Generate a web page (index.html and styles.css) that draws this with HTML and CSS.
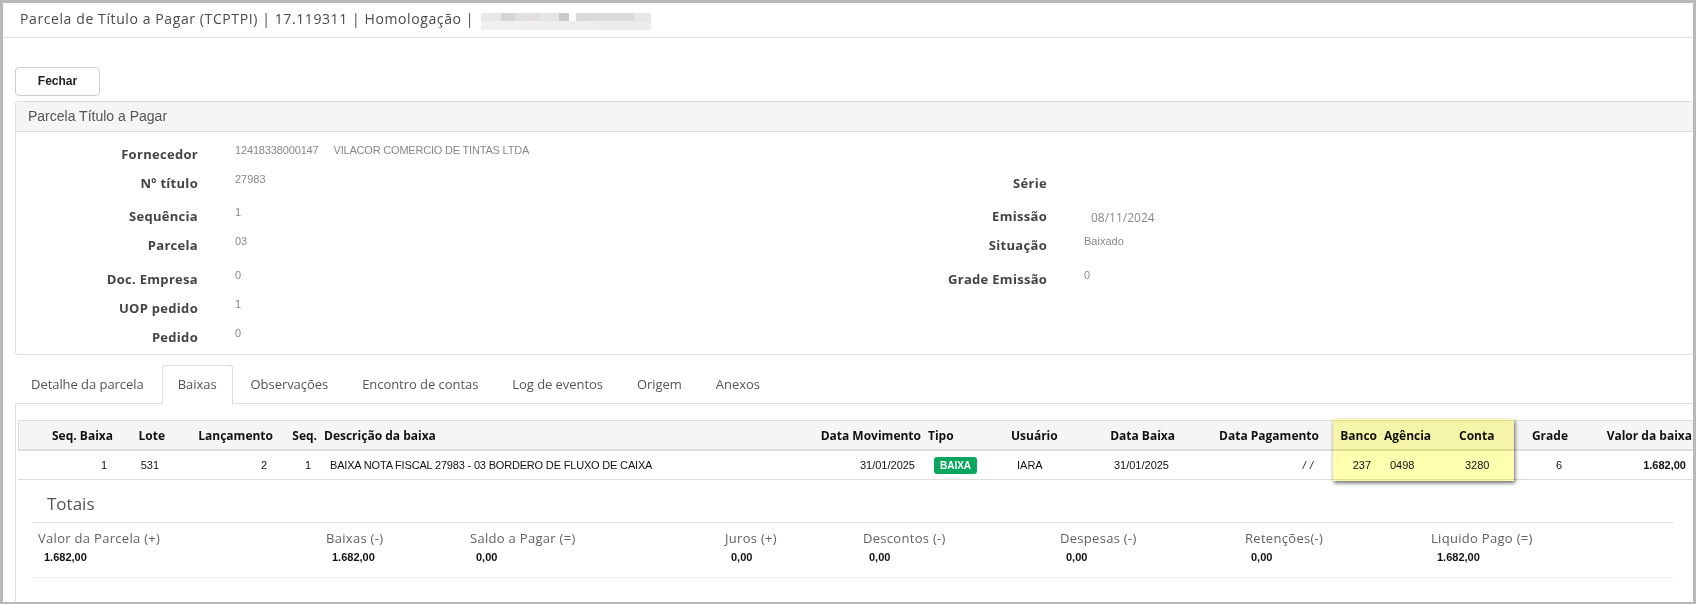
FILE: index.html
```html
<!DOCTYPE html>
<html lang="pt-BR">
<head>
<meta charset="utf-8">
<title>Parcela de Título a Pagar</title>
<link rel="stylesheet" href="styles.css">
</head>
<body>
<div class="frame">
  <header class="topbar">
    <h1 class="title">Parcela de Título a Pagar (TCPTPI) | 17.119311 | Homologação |</h1>
    <div class="redacted"></div>
  </header>
  <div class="actions"><button class="btn">Fechar</button></div>
  <section class="panel">
    <div class="panel-heading">Parcela Título a Pagar</div>
    <div class="form">
      <div class="lbl">Fornecedor</div><div class="val wide"><span class="doc">12418338000147</span><span class="name">VILACOR COMERCIO DE TINTAS LTDA</span></div>
      <div class="lbl">Nº título</div><div class="val">27983</div><div class="lbl">Série</div><div class="val v2"></div>
      <div class="lbl">Sequência</div><div class="val">1</div><div class="lbl">Emissão</div><div class="val v2 date">08/11/2024</div>
      <div class="lbl">Parcela</div><div class="val">03</div><div class="lbl">Situação</div><div class="val v2">Baixado</div>
      <div class="lbl">Doc. Empresa</div><div class="val">0</div><div class="lbl">Grade Emissão</div><div class="val v2">0</div>
      <div class="lbl">UOP pedido</div><div class="val rest">1</div>
      <div class="lbl">Pedido</div><div class="val rest">0</div>
    </div>
  </section>
  <nav class="tabs">
    <a class="tab">Detalhe da parcela</a>
    <a class="tab active">Baixas</a>
    <a class="tab">Observações</a>
    <a class="tab">Encontro de contas</a>
    <a class="tab">Log de eventos</a>
    <a class="tab">Origem</a>
    <a class="tab">Anexos</a>
  </nav>
  <section class="tab-content">
    <div class="table-wrap">
      <table class="grid">
        <colgroup>
          <col class="c1"><col class="c2"><col class="c3"><col class="c4"><col class="c5"><col class="c6"><col class="c7"><col class="c8"><col class="c9"><col class="c10"><col class="c11"><col class="c12"><col class="c13"><col class="c14"><col class="c15">
        </colgroup>
        <thead>
          <tr>
            <th class="r">Seq. Baixa</th><th class="r">Lote</th><th class="r">Lançamento</th><th class="r">Seq.</th><th class="l">Descrição da baixa</th><th class="r">Data Movimento</th><th class="l">Tipo</th><th class="l">Usuário</th><th class="r">Data Baixa</th><th class="r">Data Pagamento</th><th class="r">Banco</th><th class="l">Agência</th><th class="l">Conta</th><th class="r">Grade</th><th class="r">Valor da baixa</th>
          </tr>
        </thead>
        <tbody>
          <tr>
            <td class="r">1</td><td class="r">531</td><td class="r">2</td><td class="r">1</td><td class="l desc">BAIXA NOTA FISCAL 27983 - 03 BORDERO DE FLUXO DE CAIXA</td><td class="r">31/01/2025</td><td class="l"><span class="badge">BAIXA</span></td><td class="l">IARA</td><td class="r">31/01/2025</td><td class="r"><i class="nodate">/ /</i></td><td class="r">237</td><td class="l">0498</td><td class="l">3280</td><td class="r">6</td><td class="r strong">1.682,00</td>
          </tr>
        </tbody>
      </table>
      <div class="highlight"></div>
    </div>
    <div class="totals">
      <h2 class="totals-title">Totais</h2>
      <div class="totals-grid">
        <div class="t"><div class="t-label">Valor da Parcela (+)</div><div class="t-value">1.682,00</div></div>
        <div class="t"><div class="t-label">Baixas (-)</div><div class="t-value">1.682,00</div></div>
        <div class="t"><div class="t-label">Saldo a Pagar (=)</div><div class="t-value">0,00</div></div>
        <div class="t"><div class="t-label">Juros (+)</div><div class="t-value">0,00</div></div>
        <div class="t"><div class="t-label">Descontos (-)</div><div class="t-value">0,00</div></div>
        <div class="t"><div class="t-label">Despesas (-)</div><div class="t-value">0,00</div></div>
        <div class="t"><div class="t-label">Retenções(-)</div><div class="t-value">0,00</div></div>
        <div class="t"><div class="t-label">Liquido Pago (=)</div><div class="t-value">1.682,00</div></div>
      </div>
    </div>
  </section>
</div>
</body>
</html>
```
FILE: styles.css
```css
* { box-sizing: border-box; }
html, body { margin: 0; padding: 0; background: #fff; }
.frame {
  width: 1696px;
  height: 604px;
  border: solid #b9b9b9;
  border-width: 3px 3px 2px 3px;
  overflow: hidden;
  font-family: "Open Sans", sans-serif;
  color: #5f6264;
  display: flex;
  flex-direction: column;
}
.topbar {
  height: 35px;
  flex: none;
  border-bottom: 1px solid #ddd;
  display: flex;
  align-items: flex-start;
  padding: 6px 0 0 17px;
}
.title {
  margin: 0;
  font-size: 14px;
  font-weight: 400;
  line-height: 20px;
  letter-spacing: 0.6px;
  color: #4a4a4a;
  white-space: nowrap;
}
.redacted {
  margin: 4px 0 0 7px;
  width: 170px;
  height: 17px;
  background:
    linear-gradient(90deg, #e8e8e8 0 12%, #d4d4d4 12% 20%, #e2dfdc 20% 34%, #e4e6e4 34% 46%, #c9c9c9 46% 52%, #fff 52% 56%, #dadada 56% 90%, #e6e6e6 90%) top / 100% 8px no-repeat,
    linear-gradient(90deg, #f0f0f0, #ebebeb) bottom / 100% 9px no-repeat;
}
.actions { flex: none; padding: 29px 0 5px 12px; }
.btn {
  display: block;
  width: 85px;
  height: 29px;
  padding: 0 0 2px;
  background: #fff;
  border: 1px solid #ccc;
  border-radius: 4px;
  font: 700 12px "Liberation Sans", Arial, sans-serif;
  color: #222;
}
.panel {
  flex: none;
  height: 254px;
  margin-left: 12px;
  margin-right: -1px;
  border: 1px solid #ddd;
  border-radius: 3px;
}
.panel-heading {
  height: 30px;
  background: #f5f5f5;
  border-bottom: 1px solid #ddd;
  padding-left: 12px;
  font: 14px/28px "Liberation Sans", Arial, sans-serif;
  color: #555;
}
.form {
  display: grid;
  grid-template-columns: 183px 679px 100px 1fr;
  grid-template-rows: 29px 33px 29px 34px 29px 29px 29px;
  column-gap: 35px;
  padding-top: 9px;
}
.lbl {
  padding: 4px 1px 0 0;
  text-align: right;
  font-size: 13px;
  font-weight: 700;
  line-height: 18px;
  letter-spacing: 0.3px;
  color: #444;
  white-space: nowrap;
}
.val {
  padding-left: 1px;
  font: 11px/18px "Liberation Sans", Arial, sans-serif;
  color: #888;
  white-space: nowrap;
}
.wide, .rest { grid-column: 2 / -1; }
.doc { letter-spacing: -0.15px; }
.name { margin-left: 15px; letter-spacing: -0.2px; }
.date { padding: 6px 0 0 8px; font: 12px/18px "Open Sans", sans-serif; }
.tabs {
  flex: none;
  height: 49px;
  margin-left: 12px;
  padding-top: 10px;
  border-bottom: 1px solid #ddd;
  display: flex;
  gap: 2px;
  font-size: 13px;
  letter-spacing: -0.05px;
  color: #555;
}
.tab {
  height: 39px;
  padding: 0 15px;
  border: 1px solid transparent;
  border-bottom: 0;
  line-height: 37px;
  white-space: nowrap;
}
.tab.active {
  background: #fff;
  border-color: #ddd;
  border-radius: 3px 3px 0 0;
}
.tab-content {
  flex: 1;
  margin-left: 12px;
  border-left: 1px solid #ddd;
  padding: 16px 0 0 2px;
}
.table-wrap { position: relative; width: 1675px; }
.grid {
  table-layout: fixed;
  width: 1675px;
  border-collapse: separate;
  border-spacing: 0;
}
.c1 { width: 96px; } .c2 { width: 52px; } .c3 { width: 108px; } .c4 { width: 44px; } .c5 { width: 463px; }
.c6 { width: 141px; } .c7 { width: 83px; } .c8 { width: 72px; } .c9 { width: 99px; } .c10 { width: 144px; }
.c11 { width: 58px; } .c12 { width: 75px; } .c13 { width: 59px; } .c14 { width: 57px; } .c15 { width: 124px; }
.grid th {
  height: 31px;
  background: #f5f5f5;
  border-top: 1px solid #ddd;
  border-bottom: 2px solid #ddd;
  font-size: 12px;
  font-weight: 700;
  color: #111;
  white-space: nowrap;
  padding: 0;
}
.grid th:first-child { border-left: 1px solid #ddd; }
.grid th.r { text-align: right; padding-right: 1px; }
.grid th.l { text-align: left; padding-left: 6px; }
.grid td {
  height: 29px;
  border-bottom: 1px solid #ddd;
  font: 11px "Liberation Sans", Arial, sans-serif;
  color: #111;
  white-space: nowrap;
  padding: 0;
}
.grid td.r { text-align: right; padding-right: 7px; }
.grid td.l { text-align: left; padding-left: 12px; }
.grid td.desc { letter-spacing: -0.18px; }
.nodate { word-spacing: 1px; }
.grid td.strong { font-weight: 700; }
.badge {
  display: inline-block;
  width: 43px;
  height: 17px;
  background: #0ba75f;
  border-radius: 3px;
  color: #fff;
  font: 700 10px/17px "Liberation Sans", Arial, sans-serif;
  text-align: center;
}
.highlight {
  position: absolute;
  left: 1315px;
  top: -1px;
  width: 181px;
  height: 62px;
  background: #ffffb0;
  mix-blend-mode: multiply;
  box-shadow: 1px 2px 4px rgba(0, 0, 0, .6);
}
.totals { margin-left: 14px; width: 1642px; }
.totals-title {
  margin: 14px 0 0;
  height: 29px;
  padding-left: 15px;
  font-size: 17px;
  font-weight: 400;
  line-height: 20px;
  color: #555;
  border-bottom: 1px solid #e0e0e0;
}
.totals-grid {
  display: grid;
  grid-template-columns: 288px 144px 255px 138px 197px 185px 186px 1fr;
  height: 55px;
  padding: 6px 0 0 6px;
  border-bottom: 1px solid #eee;
  border-radius: 3px;
}
.t-label { font-size: 13px; line-height: 18px; letter-spacing: 0.3px; white-space: nowrap; }
.t-value {
  margin-top: 1px;
  padding-left: 6px;
  font: 700 11px/18px "Liberation Sans", Arial, sans-serif;
  color: #111;
}
```
